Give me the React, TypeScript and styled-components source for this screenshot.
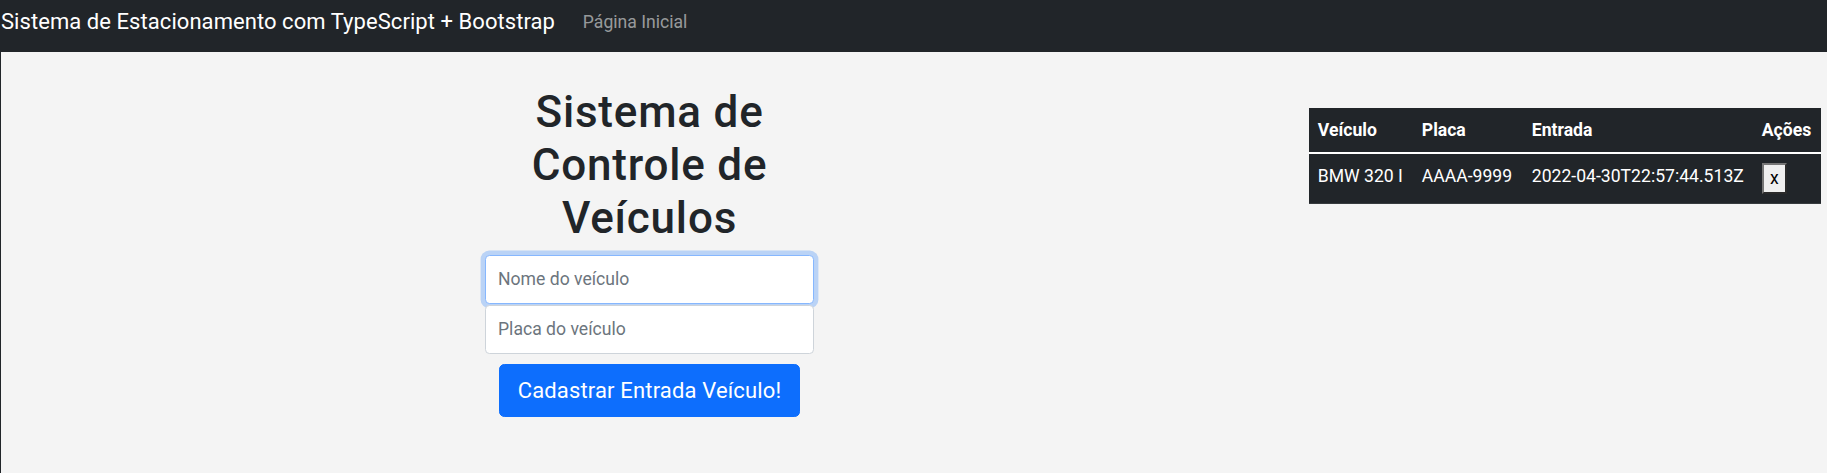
import React from "react";
import styled, { createGlobalStyle } from "styled-components";

const GlobalStyle = createGlobalStyle`
  html, body {
    margin: 0;
    padding: 0;
    background: #f4f4f4;
  }
  body {
    font-family: Roboto, "Liberation Sans", sans-serif;
    font-size: 17.6px;
    line-height: 1.5;
    color: #212529;
  }
  *, *::before, *::after {
    box-sizing: border-box;
  }
`;

const Page = styled.div`
  min-height: 473px;
  border-left: 1px solid #212529;
  background: #f4f4f4;
`;

const Navbar = styled.nav`
  display: flex;
  align-items: flex-start;
  height: 52px;
  background: #212529;
`;

const Brand = styled.a`
  padding-top: 5px;
  margin-right: 19px;
  font-size: 22px;
  line-height: 33px;
  letter-spacing: 0.06px;
  color: #fff;
  text-decoration: none;
  white-space: nowrap;
`;

const NavLink = styled.a`
  padding: 8.8px 8.8px 0;
  font-size: 17.6px;
  line-height: 26.4px;
  color: rgba(255, 255, 255, 0.55);
  text-decoration: none;
  white-space: nowrap;
`;

const Main = styled.main`
  display: flex;
  align-items: flex-start;
`;

const FormColumn = styled.section`
  flex: 0 0 1297px;
  display: flex;
  justify-content: center;
  padding-top: 34.3px;
`;

const FormBox = styled.form`
  width: 329px;
  display: flex;
  flex-direction: column;
  align-items: center;
`;

const Title = styled.h1`
  margin: 0 0 10.3px;
  font-size: 44px;
  font-weight: 500;
  line-height: 52.8px;
  letter-spacing: 0.8px;
  text-align: center;
  color: #212529;
`;

const TextInput = styled.input<{ $focused?: boolean }>`
  display: block;
  width: 100%;
  height: 49px;
  padding: 0 12px;
  font-family: inherit;
  font-size: 17.6px;
  color: #212529;
  background: #fff;
  border: 1px solid ${(p) => (p.$focused ? "#86b7fe" : "#ced4da")};
  border-radius: 4.4px;
  outline: none;
  box-shadow: ${(p) => (p.$focused ? "0 0 0 4.4px rgba(13, 110, 253, 0.25)" : "none")};

  & + & {
    margin-top: 1px;
  }

  &::placeholder {
    color: #6c757d;
    opacity: 1;
  }
`;

const SubmitButton = styled.button`
  margin-top: 10px;
  padding: 8.8px 18px;
  font-family: inherit;
  font-size: 22px;
  line-height: 33px;
  letter-spacing: 0.15px;
  color: #fff;
  background: #0d6efd;
  border: 1px solid #0d6efd;
  border-radius: 5.3px;
  white-space: nowrap;
  cursor: pointer;
`;

const TableColumn = styled.aside`
  flex: 1;
  display: flex;
  justify-content: flex-end;
  padding: 56px 6px 0 0;
`;

const Table = styled.table`
  width: 512px;
  table-layout: fixed;
  border-collapse: collapse;
  background: #212529;
  color: #fff;
`;

const HeadCell = styled.th<{ $w: number }>`
  width: ${(p) => p.$w}px;
  padding: 8.8px;
  font-weight: 700;
  line-height: 26.4px;
  text-align: left;
  vertical-align: top;
  white-space: nowrap;
  border-bottom: 2px solid #fff;
`;

const Cell = styled.td`
  padding: 8.8px;
  line-height: 26.4px;
  vertical-align: top;
  white-space: nowrap;
  border-bottom: 1px solid #373b3e;
`;

const RemoveButton = styled.button`
  display: block;
  width: 25px;
  height: 31px;
  padding: 0;
  font-family: inherit;
  font-size: 17.6px;
  line-height: 26.4px;
  color: #000;
  background: #efefef;
  border-style: solid;
  border-width: 2px;
  border-color: #767676 #2a2a2a #2a2a2a #767676;
  border-radius: 0;
`;

const columns: [string, number][] = [
  ["Veículo", 104],
  ["Placa", 110],
  ["Entrada", 230],
  ["Ações", 68],
];

const vehicles = [
  { nome: "BMW 320 I", placa: "AAAA-9999", entrada: "2022-04-30T22:57:44.513Z" },
];

export default function App() {
  return (
    <>
      <GlobalStyle />
      <Page>
        <Navbar>
          <Brand href="#">Sistema de Estacionamento com TypeScript + Bootstrap</Brand>
          <NavLink href="#">Página Inicial</NavLink>
        </Navbar>
        <Main>
          <FormColumn>
            <FormBox onSubmit={(e) => e.preventDefault()}>
              <Title>Sistema de Controle de Veículos</Title>
              <TextInput $focused type="text" placeholder="Nome do veículo" />
              <TextInput type="text" placeholder="Placa do veículo" />
              <SubmitButton type="submit">Cadastrar Entrada Veículo!</SubmitButton>
            </FormBox>
          </FormColumn>
          <TableColumn>
            <Table>
              <thead>
                <tr>
                  {columns.map(([label, w]) => (
                    <HeadCell key={label} $w={w}>
                      {label}
                    </HeadCell>
                  ))}
                </tr>
              </thead>
              <tbody>
                {vehicles.map((v) => (
                  <tr key={v.placa}>
                    <Cell>{v.nome}</Cell>
                    <Cell>{v.placa}</Cell>
                    <Cell>{v.entrada}</Cell>
                    <Cell>
                      <RemoveButton type="button">x</RemoveButton>
                    </Cell>
                  </tr>
                ))}
              </tbody>
            </Table>
          </TableColumn>
        </Main>
      </Page>
    </>
  );
}
